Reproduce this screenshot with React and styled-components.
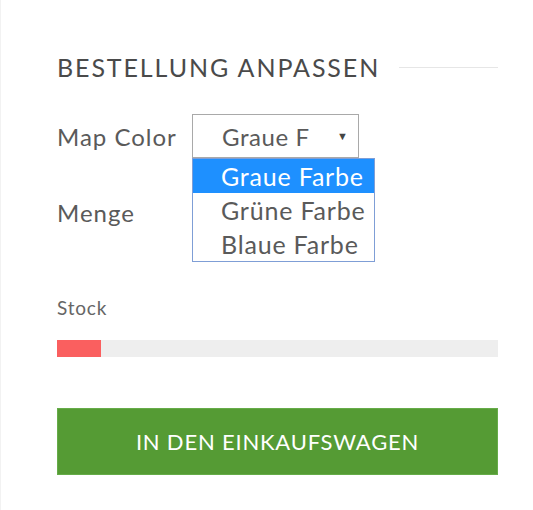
import React from "react";
import styled, { createGlobalStyle } from "styled-components";

const Global = createGlobalStyle`
  html, body { margin: 0; padding: 0; background: #fff; }
  body { font-family: Lato, "Open Sans", sans-serif; }
`;

const Page = styled.div`
  width: 533px;
  height: 510px;
  box-sizing: border-box;
  border-left: 1px solid #f2f2f2;
  padding: 51px 35px 0 56px;
  display: flex;
  flex-direction: column;
`;

const Heading = styled.div`
  display: flex;
  align-items: center;
  gap: 19px;
  font-family: Lato, sans-serif;
  font-size: 25px;
  color: #4a4a4a;
  letter-spacing: 1.9px;
  line-height: 32px;
  &::after {
    content: "";
    flex: 1;
    height: 1px;
    background: #e6e6e6;
  }
`;

const Row = styled.div`
  display: flex;
  align-items: center;
  height: ${(p) => p.h}px;
  margin-top: ${(p) => p.mt}px;
  position: relative;
`;

const Label = styled.div`
  width: 135px;
  font-size: 24px;
  letter-spacing: 1px;
  color: #5a5a5a;
`;

const SelectBox = styled.div`
  position: relative;
  width: 167px;
  height: 44px;
  box-sizing: border-box;
  border: 1px solid #a9a9a9;
  display: flex;
  align-items: center;
  padding-left: 29px;
  font-size: 24px;
  letter-spacing: 0.6px;
  color: #5a5a5a;
`;

const Arrow = styled.span`
  position: absolute;
  right: 10px;
  top: 14px;
  font-size: 11px;
  letter-spacing: 0;
  color: #444;
`;

const DropList = styled.div`
  position: absolute;
  left: -1px;
  top: 43px;
  width: 183px;
  box-sizing: border-box;
  border: 1px solid #7f9ed6;
  background: #fff;
  z-index: 2;
`;

const Option = styled.div`
  height: 34px;
  line-height: 34px;
  padding-left: 28px;
  font-size: 25px;
  letter-spacing: 0.8px;
  color: ${(p) => (p.active ? "#fff" : "#5a5a5a")};
  background: ${(p) => (p.active ? "#1e90ff" : "#fff")};
  white-space: nowrap;
`;

const StockLabel = styled.div`
  margin-top: 62px;
  font-size: 19px;
  letter-spacing: 0.8px;
  color: #666;
`;

const Bar = styled.div`
  margin-top: 21px;
  height: 17px;
  background: #eeeeee;
  display: flex;
`;

const Fill = styled.div`
  background: #fa5f5f;
  height: 100%;
`;

const CartButton = styled.button`
  margin-top: 51px;
  height: 67px;
  border: 1px solid #66ac49;
  background: #559b34;
  color: #fff;
  font-family: Lato, sans-serif;
  font-size: 22px;
  letter-spacing: 0.8px;
  cursor: pointer;
`;

export default function App() {
  return (
    <>
      <Global />
      <Page>
        <Heading>BESTELLUNG ANPASSEN</Heading>
        <Row h={44} mt={31}>
          <Label>Map Color</Label>
          <SelectBox>
            Graue F
            <Arrow>▼</Arrow>
            <DropList>
              <Option active>Graue Farbe</Option>
              <Option>Grüne Farbe</Option>
              <Option>Blaue Farbe</Option>
            </DropList>
          </SelectBox>
        </Row>
        <Row h={44} mt={32}>
          <Label>Menge</Label>
        </Row>
        <StockLabel>Stock</StockLabel>
        <Bar>
          <Fill style={{ width: "10%" }} />
        </Bar>
        <CartButton>IN DEN EINKAUFSWAGEN</CartButton>
      </Page>
    </>
  );
}
